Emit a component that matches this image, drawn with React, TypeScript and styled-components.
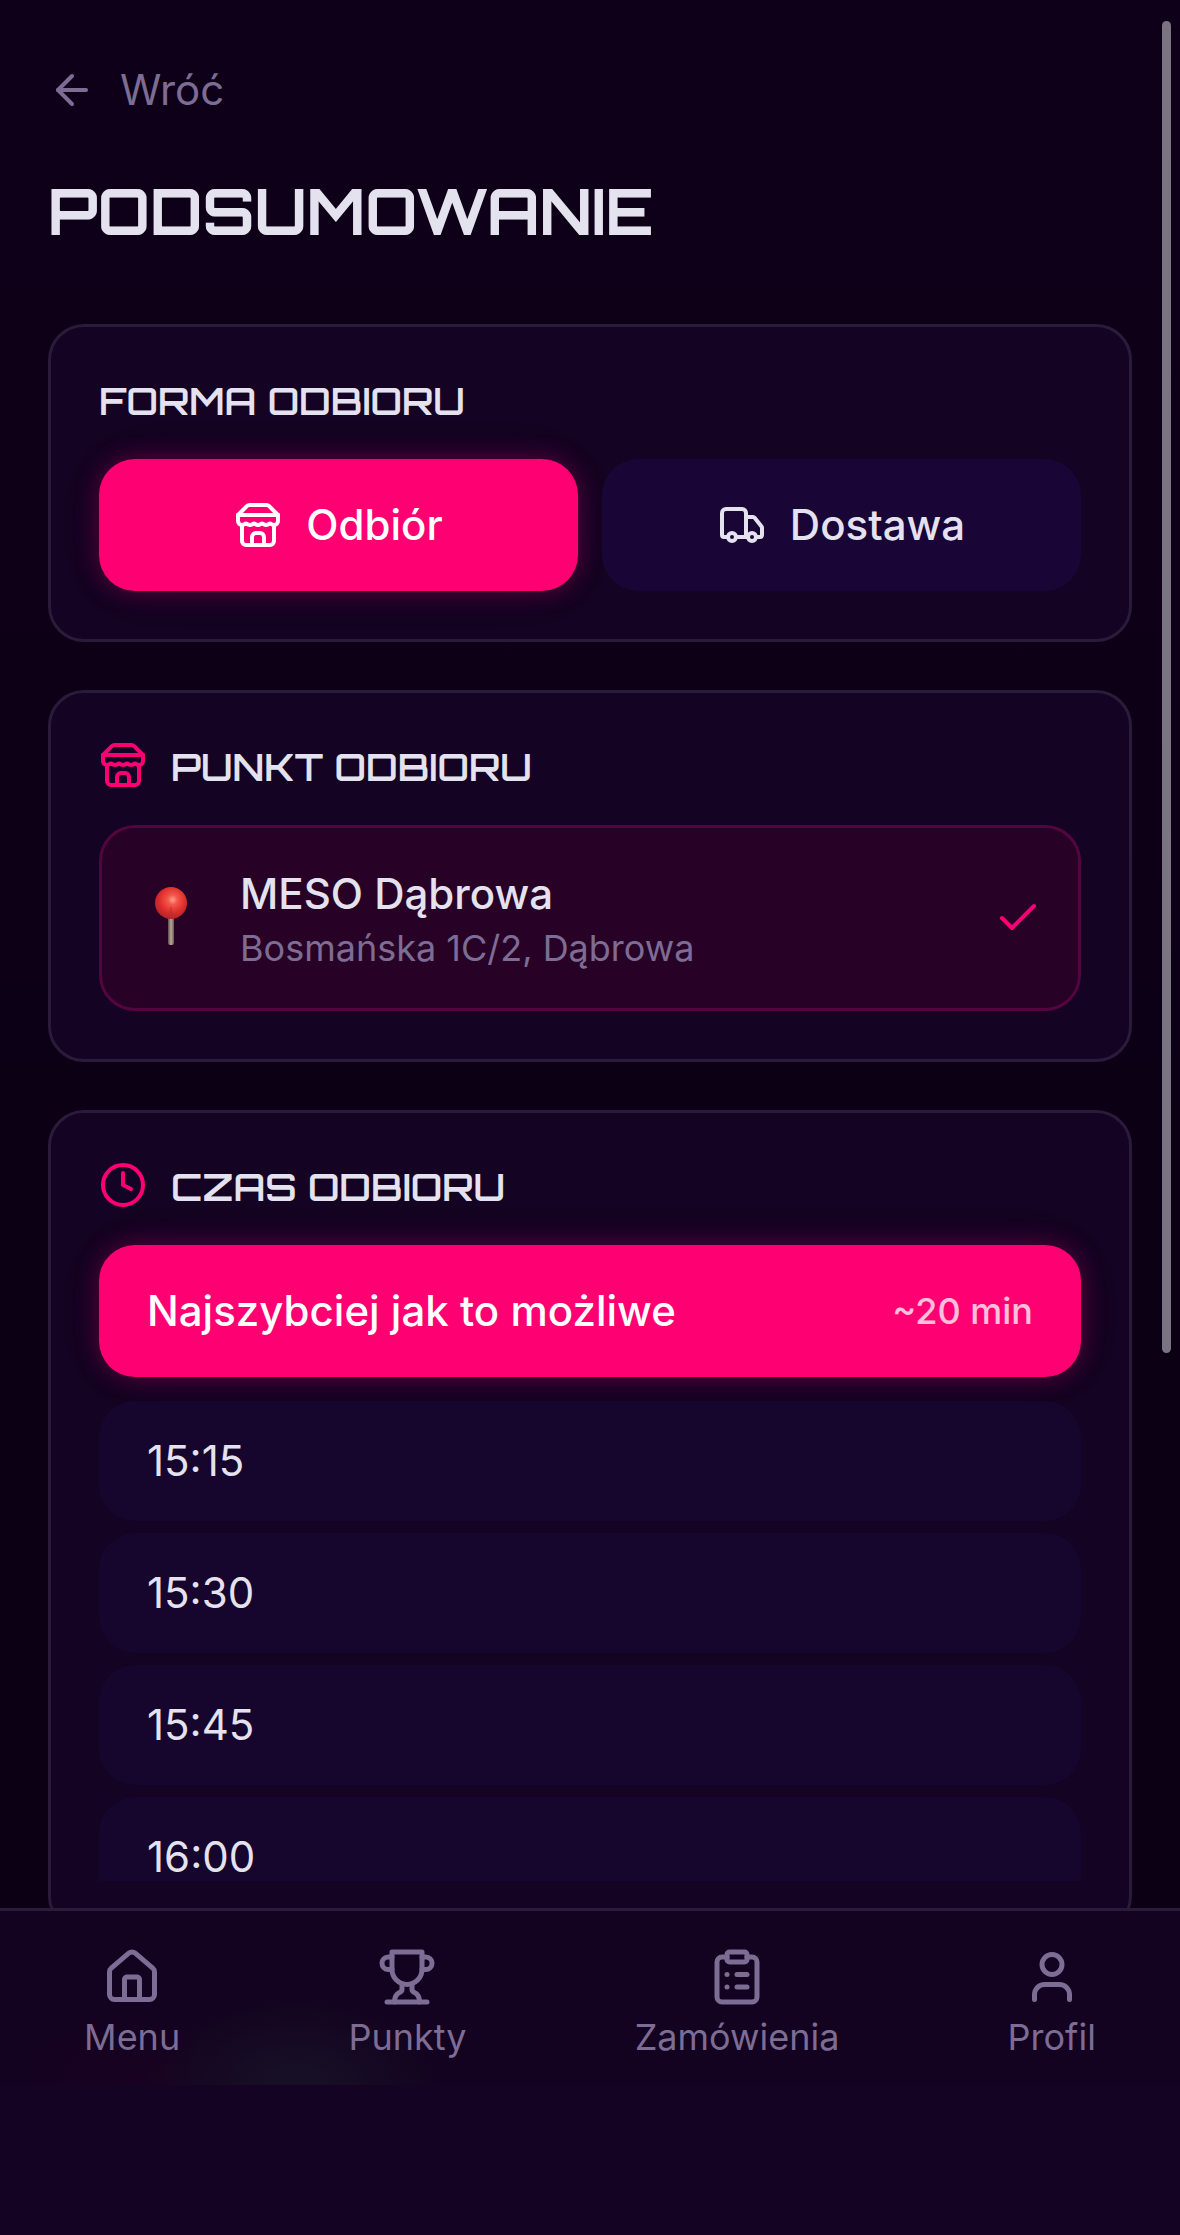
import React, { useState } from "react";
import styled, { createGlobalStyle, css } from "styled-components";

const color = {
  text: "#e4e2ee",
  muted: "#7d6c94",
  accent: "#ff0073",
  card: "#140322",
  line: "#2b1a3a",
  raised: "#190536",
  slot: "#16052d",
};

const GlobalStyle = createGlobalStyle`
  *, *::before, *::after { box-sizing: border-box; }
  html { background: #0d0017; }
  body {
    margin: 0;
    color: ${color.text};
    font-family: Inter, "Noto Sans", sans-serif;
    font-size: 42px;
    line-height: 60px;
  }
  button { font: inherit; border: 0; cursor: pointer; }
  h1, h2, p { margin: 0; }
`;

const Screen = styled.div`
  min-height: 100vh;
  background: linear-gradient(#0d0018, #0b0013);
`;

const Content = styled.main`
  padding: 60px 48px 0;
`;

const BackButton = styled.button`
  display: flex;
  align-items: center;
  gap: 24px;
  padding: 0;
  background: none;
  color: ${color.muted};
`;

const Title = styled.h1`
  margin: 48px 0 70px;
  font-family: Orbitron, "DejaVu Sans", sans-serif;
  font-size: 63px;
  font-weight: 700;
  line-height: 86px;
`;

const Sections = styled.div`
  display: flex;
  flex-direction: column;
  gap: 48px;
`;

const Card = styled.section`
  padding: 48px;
  border: 3px solid ${color.line};
  border-radius: 36px;
  background: ${color.card};
`;

const CardHeader = styled.header`
  display: flex;
  align-items: flex-start;
  gap: 24px;
  margin-bottom: 32px;
  color: ${color.accent};
`;

const CardTitle = styled.h2`
  color: ${color.text};
  font-family: Orbitron, "DejaVu Sans", sans-serif;
  font-size: 38px;
  font-weight: 600;
  line-height: 52px;
`;

const glow = css`
  box-shadow: 0 0 24px rgba(255, 0, 115, 0.3), 0 0 60px rgba(255, 0, 115, 0.04);
`;

const Methods = styled.div`
  display: grid;
  grid-template-columns: 1fr 1fr;
  gap: 24px;
`;

const MethodButton = styled.button<{ $active: boolean }>`
  display: flex;
  align-items: center;
  justify-content: center;
  gap: 24px;
  padding: 36px;
  border-radius: 36px;
  font-weight: 500;
  background: ${(p) => (p.$active ? color.accent : color.raised)};
  color: ${(p) => (p.$active ? "#fff" : color.text)};
  ${(p) => p.$active && glow}
`;

const Location = styled.button`
  display: flex;
  align-items: center;
  gap: 36px;
  width: 100%;
  padding: 36px;
  border: 3px solid #54053f;
  border-radius: 36px;
  background: #270226;
  color: ${color.accent};
  text-align: left;
`;

const LocationText = styled.span`
  display: flex;
  flex: 1;
  flex-direction: column;
`;

const LocationName = styled.span`
  color: ${color.text};
  font-weight: 500;
`;

const Address = styled.span`
  color: ${color.muted};
  font-size: 36px;
  line-height: 48px;
`;

const AsapButton = styled.button<{ $active: boolean }>`
  display: flex;
  align-items: center;
  justify-content: space-between;
  width: 100%;
  margin-bottom: 24px;
  padding: 36px 48px;
  border-radius: 36px;
  font-weight: 500;
  background: ${(p) => (p.$active ? color.accent : color.raised)};
  color: #fff;
  ${(p) => p.$active && glow}
`;

const Estimate = styled.span`
  font-size: 36px;
  line-height: 48px;
  opacity: 0.75;
`;

const Slots = styled.div`
  display: flex;
  flex-direction: column;
  gap: 12px;
  max-height: 480px;
  overflow-y: auto;
  scrollbar-width: none;
`;

const Slot = styled.button<{ $active: boolean }>`
  flex-shrink: 0;
  padding: 30px 48px;
  border-radius: 36px;
  background: ${(p) => (p.$active ? color.accent : color.slot)};
  color: ${color.text};
  text-align: left;
`;

const ScrollThumb = styled.div`
  position: fixed;
  top: 21px;
  right: 9px;
  width: 9px;
  height: 1332px;
  border-radius: 5px;
  background: #7a7382;
`;

const BottomNav = styled.nav`
  position: fixed;
  right: 0;
  bottom: 0;
  left: 0;
  padding-bottom: 150px;
  border-top: 3px solid ${color.line};
  background: ${color.card};
`;

const NavRow = styled.div`
  display: flex;
  justify-content: space-around;
  padding: 36px 0 24px;
  background:
    radial-gradient(ellipse 150px 90px at 295px 100%, #170f25 20%, rgba(23, 15, 37, 0) 100%),
    radial-gradient(ellipse 110px 70px at 130px 100%, #190221 10%, rgba(25, 2, 33, 0) 100%),
    #130220;
`;

const NavLink = styled.a`
  display: flex;
  flex-direction: column;
  align-items: center;
  gap: 6px;
  color: ${color.muted};
  font-size: 36px;
  line-height: 48px;
  text-decoration: none;
`;

const Svg = styled.svg`
  display: block;
  flex-shrink: 0;
  fill: none;
  stroke: currentColor;
  stroke-width: 2;
  stroke-linecap: round;
  stroke-linejoin: round;
`;

const PinSvg = styled.svg`
  display: block;
  flex-shrink: 0;
`;

type IconProps = { size?: number; children?: React.ReactNode };

const Icon = ({ size = 48, children }: IconProps) => (
  <Svg width={size} height={size} viewBox="0 0 24 24" aria-hidden="true">
    {children}
  </Svg>
);

const ArrowIcon = () => (
  <Icon>
    <path d="m12 19-7-7 7-7" />
    <path d="M19 12H5" />
  </Icon>
);

const StoreIcon = () => (
  <Icon>
    <path d="m2 7 4.41-4.41A2 2 0 0 1 7.83 2h8.34a2 2 0 0 1 1.42.59L22 7" />
    <path d="M4 12v8a2 2 0 0 0 2 2h12a2 2 0 0 0 2-2v-8" />
    <path d="M15 22v-4a2 2 0 0 0-2-2h-2a2 2 0 0 0-2 2v4" />
    <path d="M2 7h20" />
    <path d="M22 7v3a2 2 0 0 1-2 2a2.7 2.7 0 0 1-1.59-.63.7.7 0 0 0-.82 0A2.7 2.7 0 0 1 16 12a2.7 2.7 0 0 1-1.59-.63.7.7 0 0 0-.82 0A2.7 2.7 0 0 1 12 12a2.7 2.7 0 0 1-1.59-.63.7.7 0 0 0-.82 0A2.7 2.7 0 0 1 8 12a2.7 2.7 0 0 1-1.59-.63.7.7 0 0 0-.82 0A2.7 2.7 0 0 1 4 12a2 2 0 0 1-2-2V7" />
  </Icon>
);

const TruckIcon = () => (
  <Icon>
    <path d="M14 18V6a2 2 0 0 0-2-2H4a2 2 0 0 0-2 2v11a1 1 0 0 0 1 1h2" />
    <path d="M15 18H9" />
    <path d="M19 18h2a1 1 0 0 0 1-1v-3.65a1 1 0 0 0-.22-.624l-3.48-4.35A1 1 0 0 0 17.52 8H14" />
    <circle cx="17" cy="18" r="2" />
    <circle cx="7" cy="18" r="2" />
  </Icon>
);

const ClockIcon = () => (
  <Icon>
    <circle cx="12" cy="12" r="10" />
    <path d="M12 6v6l4 2" />
  </Icon>
);

const CheckIcon = () => (
  <Icon>
    <path d="M20 6 9 17l-5-5" />
  </Icon>
);

const HomeIcon = () => (
  <Icon size={60}>
    <path d="M15 21v-8a1 1 0 0 0-1-1h-4a1 1 0 0 0-1 1v8" />
    <path d="M3 10a2 2 0 0 1 .709-1.528l7-5.999a2 2 0 0 1 2.582 0l7 5.999A2 2 0 0 1 21 10v9a2 2 0 0 1-2 2H5a2 2 0 0 1-2-2z" />
  </Icon>
);

const TrophyIcon = () => (
  <Icon size={60}>
    <path d="M6 9H4.5a2.5 2.5 0 0 1 0-5H6" />
    <path d="M18 9h1.5a2.5 2.5 0 0 0 0-5H18" />
    <path d="M4 22h16" />
    <path d="M10 14.66V17c0 .55-.47.98-.97 1.21C7.85 18.75 7 20.24 7 22" />
    <path d="M14 14.66V17c0 .55.47.98.97 1.21C16.15 18.75 17 20.24 17 22" />
    <path d="M18 2H6v7a6 6 0 0 0 12 0V2Z" />
  </Icon>
);

const OrdersIcon = () => (
  <Icon size={60}>
    <rect x="8" y="2" width="8" height="4" rx="1" />
    <path d="M16 4h2a2 2 0 0 1 2 2v14a2 2 0 0 1-2 2H6a2 2 0 0 1-2-2V6a2 2 0 0 1 2-2h2" />
    <path d="M12 11h4" />
    <path d="M12 16h4" />
    <path d="M8 11h.01" />
    <path d="M8 16h.01" />
  </Icon>
);

const UserIcon = () => (
  <Icon size={60}>
    <path d="M19 21v-2a4 4 0 0 0-4-4H9a4 4 0 0 0-4 4v2" />
    <circle cx="12" cy="7" r="4" />
  </Icon>
);

const PinIcon = () => (
  <PinSvg width="66" height="72" viewBox="0 0 66 72" aria-hidden="true">
    <defs>
      <radialGradient id="pin-head" cx="0.55" cy="0.4" r="0.6">
        <stop offset="0" stopColor="#ffa08c" />
        <stop offset="0.25" stopColor="#f4574a" />
        <stop offset="0.7" stopColor="#dc2a2a" />
        <stop offset="1" stopColor="#b3242c" />
      </radialGradient>
      <linearGradient id="pin-needle" x1="0" x2="1" y1="0" y2="0">
        <stop offset="0" stopColor="#5d4a4c" />
        <stop offset="0.5" stopColor="#b9a79a" />
        <stop offset="1" stopColor="#6b5553" />
      </linearGradient>
    </defs>
    <rect x="30" y="32" width="6" height="31" rx="2" fill="url(#pin-needle)" />
    <circle cx="33" cy="21" r="16" fill="url(#pin-head)" />
    <path d="M31 36 32 26q1-2 2 0l1 10z" fill="#a8323a" opacity="0.5" />
  </PinSvg>
);

const slots = ["15:15", "15:30", "15:45", "16:00"];

const links = [
  { label: "Menu", icon: <HomeIcon /> },
  { label: "Punkty", icon: <TrophyIcon /> },
  { label: "Zamówienia", icon: <OrdersIcon /> },
  { label: "Profil", icon: <UserIcon /> },
];

export default function App() {
  const [method, setMethod] = useState("pickup");
  const [time, setTime] = useState("asap");

  return (
    <Screen>
      <GlobalStyle />
      <Content>
        <BackButton type="button">
          <ArrowIcon />
          Wróć
        </BackButton>
        <Title>PODSUMOWANIE</Title>
        <Sections>
          <Card>
            <CardHeader>
              <CardTitle>FORMA ODBIORU</CardTitle>
            </CardHeader>
            <Methods>
              <MethodButton
                type="button"
                $active={method === "pickup"}
                aria-pressed={method === "pickup"}
                onClick={() => setMethod("pickup")}
              >
                <StoreIcon />
                Odbiór
              </MethodButton>
              <MethodButton
                type="button"
                $active={method === "delivery"}
                aria-pressed={method === "delivery"}
                onClick={() => setMethod("delivery")}
              >
                <TruckIcon />
                Dostawa
              </MethodButton>
            </Methods>
          </Card>
          <Card>
            <CardHeader>
              <StoreIcon />
              <CardTitle>PUNKT ODBIORU</CardTitle>
            </CardHeader>
            <Location type="button" aria-pressed="true">
              <PinIcon />
              <LocationText>
                <LocationName>MESO Dąbrowa</LocationName>
                <Address>Bosmańska 1C/2, Dąbrowa</Address>
              </LocationText>
              <CheckIcon />
            </Location>
          </Card>
          <Card>
            <CardHeader>
              <ClockIcon />
              <CardTitle>CZAS ODBIORU</CardTitle>
            </CardHeader>
            <AsapButton
              type="button"
              $active={time === "asap"}
              aria-pressed={time === "asap"}
              onClick={() => setTime("asap")}
            >
              <span>Najszybciej jak to możliwe</span>
              <Estimate>~20 min</Estimate>
            </AsapButton>
            <Slots>
              {slots.map((slot) => (
                <Slot
                  key={slot}
                  type="button"
                  $active={time === slot}
                  aria-pressed={time === slot}
                  onClick={() => setTime(slot)}
                >
                  {slot}
                </Slot>
              ))}
            </Slots>
          </Card>
        </Sections>
      </Content>
      <ScrollThumb aria-hidden="true" />
      <BottomNav>
        <NavRow>
          {links.map((link) => (
            <NavLink key={link.label} href="#">
              {link.icon}
              {link.label}
            </NavLink>
          ))}
        </NavRow>
      </BottomNav>
    </Screen>
  );
}
